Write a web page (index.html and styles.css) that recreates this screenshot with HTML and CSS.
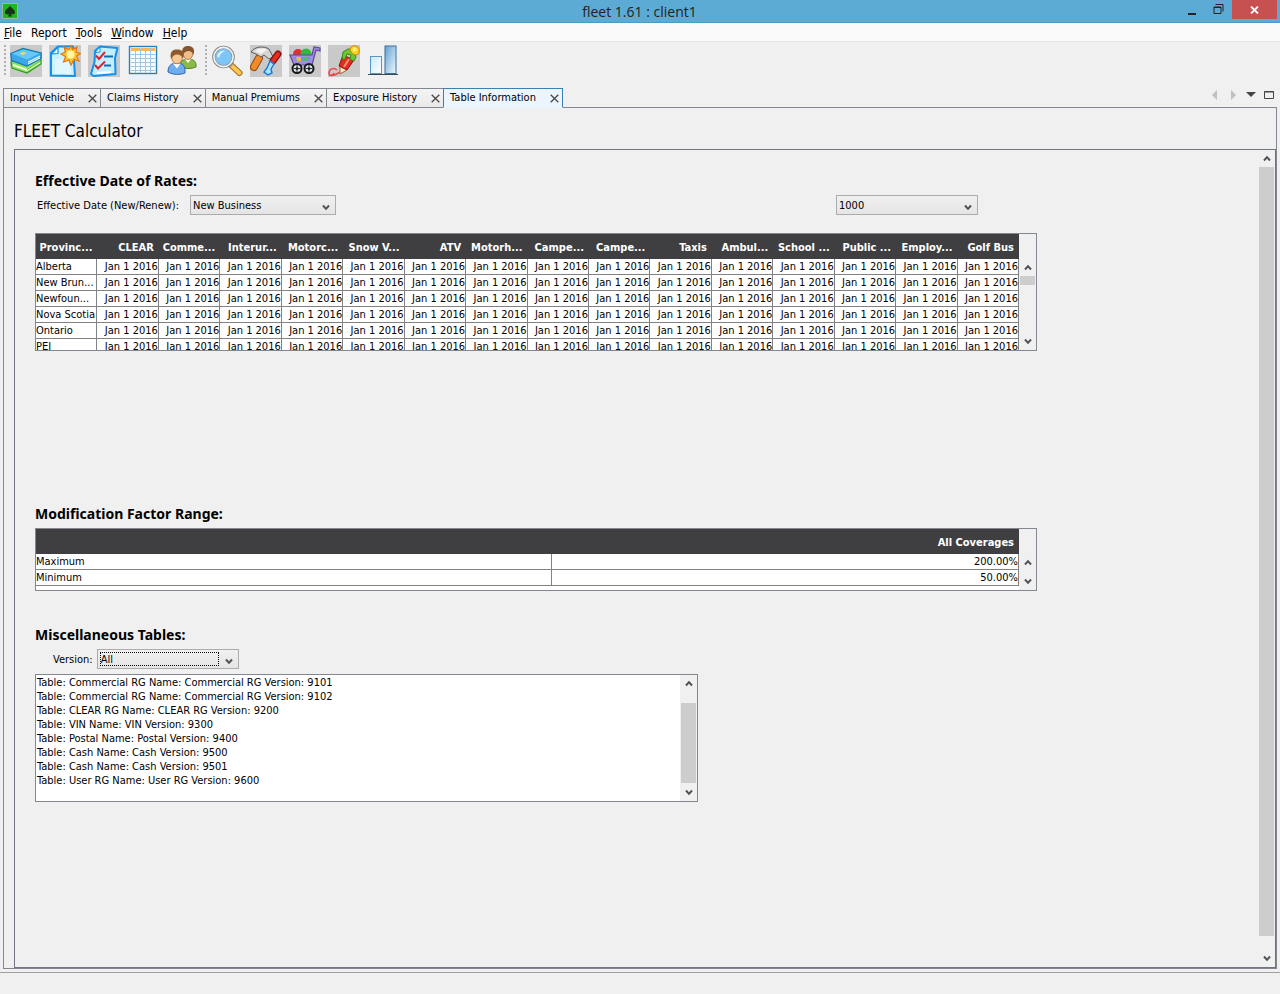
FILE: index.html
```
<!DOCTYPE html>
<html lang="en">
<head>
    <meta charset="UTF-8">
    <meta name="viewport" content="width=device-width, initial-scale=1.0">
    <title>fleet 1.61 : client1</title>
    <link rel="stylesheet" href="styles.css">
</head>
<body>

    <svg class="symbols" aria-hidden="true">
        <symbol id="up" viewBox="0 0 8 7"><path d="M1 5.5 4 2.2 7 5.5" fill="none" stroke="#505058" stroke-width="2"/></symbol>
        <symbol id="down" viewBox="0 0 8 7"><path d="M1 1.5 4 4.8 7 1.5" fill="none" stroke="#505058" stroke-width="2"/></symbol>
        <symbol id="cross" viewBox="0 0 9 9"><path d="M.7.7 8.3 8.3M8.3.7.7 8.3" fill="none" stroke="#484848" stroke-width="1.3"/></symbol>
    </svg>

    <header class="titlebar">
        <svg class="app-icon" viewBox="0 0 16 16"><rect width="16" height="16" fill="#9cb89c"/><rect x="1" y="1" width="14" height="14" fill="#22b51e"/><path d="M8 2.500C7 5 3 6.500 3 9.200c0 2.300 2.800 2.800 4.200 1.200L6 13.500h4l-1.200-3.100C10.200 12 13 11.500 13 9.200 13 6.500 9 5 8 2.500z" fill="#173417"/></svg>
        <h1 class="window-title">fleet 1.61 : client1</h1>
        <div class="window-buttons">
            <button class="win-btn" aria-label="Minimize"><svg width="10" height="12"><path d="M1 9h8v2H1z" fill="#222"/></svg></button>
            <button class="win-btn" aria-label="Restore"><svg width="11" height="11"><path d="M1 3h7v6.500H1zM2.500.5H10v7" fill="none" stroke="#222"/><path d="M1 3.500h7" stroke="#222"/></svg></button>
            <button class="win-btn win-close" aria-label="Close"><svg width="9" height="8"><path d="M1 .5 8 7.500M8 .5 1 7.500" stroke="#fff" stroke-width="1.800"/></svg></button>
        </div>
    </header>

    <nav class="menubar">
        <button><u>F</u>ile</button>
        <button>Report</button>
        <button><u>T</u>ools</button>
        <button><u>W</u>indow</button>
        <button><u>H</u>elp</button>
    </nav>

    <div class="toolbar">
        <div class="tool-group">
            <button class="tool shaded" aria-label="Books">
                <svg viewBox="0 0 32 32">
                    <path d="M1 17 17 12 31 15v4L17 28 2 23z" fill="#8be05a" stroke="#2c9c26" stroke-width="1.200"/>
                    <path d="M3 20 17 25 30 17" fill="none" stroke="#e8ffd8" stroke-width="2"/>
                    <path d="M17 24.500 30 16.500" stroke="#52b838"/>
                    <path d="M0.800 8.500 13 3.500 31.200 8v5.500L17 21 1.500 15.500z" fill="#3ba6e8" stroke="#1479b8" stroke-width="1.200"/>
                    <path d="M2 8.500 13.500 4.500 29.500 8.500 17 14.500z" fill="#66c8f8"/>
                    <path d="M18 16.500 30 10.500v3L18 19.500z" fill="#eefcff"/>
                    <path d="M18 18 30 12" stroke="#76b8d8" stroke-width=".8"/>
                    <path d="M9.500 8.500 13 7l3.500 1-3.500 2z" fill="#f5e03a"/>
                </svg>
            </button>
            <button class="tool shaded" aria-label="New document">
                <svg viewBox="0 0 32 32">
                    <path d="M2 8 9 1.500h15L26 31 2 30.500z" fill="#c9f1ff" stroke="#1291ee" stroke-width="2" stroke-linejoin="round"/>
                    <path d="M9 2v6.500L2.500 9z" fill="#eefcff" stroke="#1291ee" stroke-width="1.200"/>
                    <path d="M6 14h9l7 7v8H6z" fill="#e8fbff" opacity=".7"/>
                    <path d="M22 0l1.500 4.500L28 2l-1 5 4.500 1.500L27.500 11l2.500 5-5-1.500L22 20l-2-5-5.500 2 2-5.500L12 9l4.500-2L15 2l5 2.500z" fill="#ffc22e" stroke="#e8780c" stroke-width="1.200"/>
                    <circle cx="21.500" cy="9.500" r="4" fill="#fff6a8"/>
                </svg>
            </button>
            <button class="tool shaded" aria-label="Checklist">
                <svg viewBox="0 0 32 32">
                    <path d="M7 6 12 1.500 29.500 3 27 13l.5 16-22 2L3 29 6.500 17z" fill="#c2efff" stroke="#1291ee" stroke-width="2" stroke-linejoin="round"/>
                    <path d="M12 2v5L7 7.500z" fill="#f2fdff" stroke="#1291ee"/>
                    <path d="M16 11.500h9M16 20.500h7" stroke="#1768b5" stroke-width="2.200"/>
                    <path d="M8 10.500 11 14l6-7M7 20l3 3.500 7-7" fill="none" stroke="#e0202c" stroke-width="2"/>
                    <path d="M9 28l14-1" stroke="#fff" stroke-width="2"/>
                </svg>
            </button>
            <button class="tool" aria-label="Table">
                <svg viewBox="0 0 32 32">
                    <rect x="2.500" y="1.500" width="27" height="27" fill="#f6fcff" stroke="#2d82b4" stroke-width="1.400"/>
                    <path d="M4 3h24v3H4z" fill="#f5ba52"/>
                    <path d="M4 9.500h24M4 13.500h24M4 17.500h24M4 21.500h24M4 25.500h24M8.500 3v25M13.500 3v25M18.500 3v25M23.500 3v25" stroke="#9cc8e2"/>
                </svg>
            </button>
            <button class="tool" aria-label="Users">
                <svg viewBox="0 0 32 32">
                    <path d="M14 22c0-6 3-8 8-8s8 2 8 6v2c-5 2-11 2-16 0z" fill="#8cba48" stroke="#56822c"/>
                    <path d="m19 14 3 4 3-4z" fill="#fff"/>
                    <ellipse cx="22" cy="8.500" rx="4.800" ry="6" fill="#f0bd8c" stroke="#a86c38" stroke-width=".8"/>
                    <path d="M16.500 10C15 3 18 1 22 1s7.500 2 5.500 9c-1-3-3-4-5-4s-4 1-6 4z" fill="#85562c"/>
                    <path d="M2 27c0-6 3-9 9-9s8 3 8 8v2c-5 2-12 2-17-1z" fill="#6eacee" stroke="#2c68ae"/>
                    <path d="m7 18.500 4 5 3.500-5z" fill="#fff"/>
                    <ellipse cx="11" cy="12.500" rx="5.300" ry="6.300" fill="#f7c894" stroke="#a86c38" stroke-width=".8"/>
                    <path d="M5 14C3.500 7 6 4.500 11 4.500s8.500 2.500 6 9.500c-1-3-3-4.500-6-4.500S7 11 5 14z" fill="#8f5a2c"/>
                </svg>
            </button>
        </div>
        <div class="tool-group">
            <button class="tool" aria-label="Search">
                <svg viewBox="0 0 32 32">
                    <path d="m19 19 9.500 9" stroke="#a4702a" stroke-width="6" stroke-linecap="round"/>
                    <path d="m21 21 7.500 7" stroke="#ffc350" stroke-width="4" stroke-linecap="round"/>
                    <path d="m18 18 3 3" stroke="#999" stroke-width="3"/>
                    <circle cx="12.500" cy="12" r="9.800" fill="#7cc5f4" stroke="#858585" stroke-width="3"/>
                    <circle cx="12.500" cy="12" r="9.600" fill="none" stroke="#f5f5f5" stroke-width="1.600"/>
                    <path d="M6 11c1-4 5-6 8-5-3 1-5 3-6 7z" fill="#d8f4ff"/>
                </svg>
            </button>
            <button class="tool shaded" aria-label="Settings">
                <svg viewBox="0 0 32 32">
                    <path d="M9 13 4 22" stroke="#8c4a14" stroke-width="8" stroke-linecap="round"/>
                    <path d="M9 13 4 22" stroke="#f08a2c" stroke-width="6" stroke-linecap="round"/>
                    <path d="M1 7C5 1 14 1 19 4l4 8-4 2-5-4-3 2-5-3z" fill="#d4d4d4" stroke="#5c5c5c"/>
                    <path d="M5 6c4-3 9-3 12-1l-6 4z" fill="#f2f2f2"/>
                    <path d="m28 9-5 7" stroke="#8c1010" stroke-width="7" stroke-linecap="round"/>
                    <path d="m28 9-5 7" stroke="#e03022" stroke-width="4" stroke-linecap="round"/>
                    <path d="m20 16 4 3-3 5 1 4-4 2-4-3 3-4z" fill="#a6e5ff" stroke="#1875dc" stroke-width="1.400"/>
                </svg>
            </button>
            <button class="tool shaded" aria-label="Cart">
                <svg viewBox="0 0 32 32">
                    <circle cx="9" cy="9" r="5" fill="#e03030"/>
                    <circle cx="17" cy="9" r="5.500" fill="#34b83c"/>
                    <path d="M1 10h22l2-8 6 1v3l-4-1-4 15H5z" fill="#a48ae0" stroke="#5f469c" stroke-width="1.200"/>
                    <path d="M5 12h16l-1 4H7z" fill="#5c9de0"/>
                    <path d="M7 12h5v4H8z" fill="#eebb38"/>
                    <path d="M14 12h4v4h-4z" fill="#55bb68"/>
                    <circle cx="8" cy="23.500" r="4.500" fill="#dcebf5" stroke="#181818" stroke-width="2"/>
                    <circle cx="20" cy="23.500" r="4.500" fill="#dcebf5" stroke="#181818" stroke-width="2"/>
                    <path d="M8 20v7M4.500 23.500h7M20 20v7M16.500 23.500h7" stroke="#333"/>
                    <circle cx="8" cy="23.500" r="1.500" fill="#222"/><circle cx="20" cy="23.500" r="1.500" fill="#222"/>
                </svg>
            </button>
            <button class="tool shaded" aria-label="Edit">
                <svg viewBox="0 0 32 32">
                    <path d="M9 25C6 22 1 24 1 28c0 3 4 3 5 0M1 30c4 2 8-1 11-3" fill="none" stroke="#f04444" stroke-width="1.500"/>
                    <path d="m12 20 7 5-7 4z" fill="#ffe8c8" stroke="#936838"/>
                    <path d="m15 10 11 5-7 10-8-4z" fill="#e42a1d" stroke="#8c170c"/>
                    <path d="m21 14-5 8" stroke="#ff8c70" stroke-width="2"/>
                    <path d="m14 14 1-7 5-3h4l4 8-2 4-4-2 1-4-4-1-2 5z" fill="#6cc832" stroke="#3a8a18"/>
                    <path d="M22 5c0-3 3-5 6-4s4 4 3 7c-2 3-6 3-9-3z" fill="#ffd322" stroke="#cf7d10"/>
                    <circle cx="26.500" cy="4.500" r="2" fill="#fff27a"/>
                </svg>
            </button>
            <button class="tool" aria-label="Chart">
                <svg viewBox="0 0 32 32">
                    <defs>
                        <linearGradient id="bar" x2="1" y2="1"><stop stop-color="#669fd0"/><stop offset="1" stop-color="#eefaff"/></linearGradient>
                        <linearGradient id="bar2" y2="1"><stop stop-color="#c9e8fc"/><stop offset="1" stop-color="#fff"/></linearGradient>
                    </defs>
                    <rect x="3.500" y="11.500" width="11" height="17" fill="url(#bar2)" stroke="#5b94be"/>
                    <rect x="18" y="1" width="11" height="27.500" fill="url(#bar)" stroke="#3470a4"/>
                    <path d="M1 29.500h30" stroke="#3c4854"/>
                </svg>
            </button>
        </div>
    </div>

    <div class="tabs">
        <div class="tab"><button>Input Vehicle</button><button class="tab-close" aria-label="Close"><svg><use href="#cross"/></svg></button></div>
        <div class="tab"><button>Claims History</button><button class="tab-close" aria-label="Close"><svg><use href="#cross"/></svg></button></div>
        <div class="tab"><button>Manual Premiums</button><button class="tab-close" aria-label="Close"><svg><use href="#cross"/></svg></button></div>
        <div class="tab"><button>Exposure History</button><button class="tab-close" aria-label="Close"><svg><use href="#cross"/></svg></button></div>
        <div class="tab active"><button>Table Information</button><button class="tab-close" aria-label="Close"><svg><use href="#cross"/></svg></button></div>
        <div class="tab-controls">
            <button aria-label="Previous"><svg width="10" height="10"><path d="M7 0v10L2 5z" fill="#c0c0c0"/></svg></button>
            <button aria-label="Next"><svg width="10" height="10"><path d="M3 0v10l5-5z" fill="#c0c0c0"/></svg></button>
            <button aria-label="List tabs"><svg width="10" height="10"><path d="M0 2h10L5 7z" fill="#444"/></svg></button>
            <button aria-label="Maximize"><svg width="10" height="10"><path d="M.5 1.500h9v7h-9zM0 2h10" fill="none" stroke="#444"/></svg></button>
        </div>
    </div>

    <main class="page">
        <h2 class="page-title">FLEET Calculator</h2>
        <div class="pane">
            <div class="content">

                <section class="rates">
                    <h3>Effective Date of Rates:</h3>
                    <div class="form-row">
                        <label for="business">Effective Date (New/Renew):</label>
                        <select id="business" class="combo business"><option>New Business</option></select>
                        <select class="combo number" aria-label="Number"><option>1000</option></select>
                    </div>
                    <div class="grid rates-grid">
                        <table id="rates">
                            <thead>
                                <tr></tr>
                            </thead>
                            <tbody></tbody>
                        </table>
                        <div class="scroll under-head">
                            <button aria-label="Scroll up"><svg><use href="#up"/></svg></button>
                            <div class="thumb"></div>
                            <button aria-label="Scroll down"><svg><use href="#down"/></svg></button>
                        </div>
                    </div>
                </section>

                <section class="factors">
                    <h3>Modification Factor Range:</h3>
                    <div class="grid factor-grid">
                        <table>
                            <thead>
                                <tr><th class="factor-name"></th><th>All Coverages</th></tr>
                            </thead>
                            <tbody>
                                <tr><td>Maximum</td><td>200.00%</td></tr>
                                <tr><td>Minimum</td><td>50.00%</td></tr>
                            </tbody>
                        </table>
                        <div class="scroll under-head">
                            <button aria-label="Scroll up"><svg><use href="#up"/></svg></button>
                            <button aria-label="Scroll down"><svg><use href="#down"/></svg></button>
                        </div>
                    </div>
                </section>

                <section class="misc">
                    <h3>Miscellaneous Tables:</h3>
                    <div class="form-row version-row">
                        <label for="version">Version:</label>
                        <div class="combo version">
                            <select id="version"><option>All</option></select>
                        </div>
                    </div>
                    <div class="list-box">
                        <ul>
                            <li>Table: Commercial RG Name: Commercial RG Version: 9101</li>
                            <li>Table: Commercial RG Name: Commercial RG Version: 9102</li>
                            <li>Table: CLEAR RG Name: CLEAR RG Version: 9200</li>
                            <li>Table: VIN Name: VIN Version: 9300</li>
                            <li>Table: Postal Name: Postal Version: 9400</li>
                            <li>Table: Cash Name: Cash Version: 9500</li>
                            <li>Table: Cash Name: Cash Version: 9501</li>
                            <li>Table: User RG Name: User RG Version: 9600</li>
                        </ul>
                        <div class="scroll list-scroll">
                            <button aria-label="Scroll up"><svg><use href="#up"/></svg></button>
                            <div class="thumb"></div>
                            <button aria-label="Scroll down"><svg><use href="#down"/></svg></button>
                        </div>
                    </div>
                </section>

            </div>
            <div class="scroll page-scroll">
                <button aria-label="Scroll up"><svg><use href="#up"/></svg></button>
                <div class="thumb"></div>
                <button aria-label="Scroll down"><svg><use href="#down"/></svg></button>
            </div>
        </div>
    </main>

    <footer class="statusbar"></footer>

    <script>
        const columns = ['Provinc...', 'CLEAR', 'Comme...', 'Interur...', 'Motorc...', 'Snow V...', 'ATV', 'Motorh...',
            'Campe...', 'Campe...', 'Taxis', 'Ambul...', 'School ...', 'Public ...', 'Employ...', 'Golf Bus'];
        const provinces = ['Alberta', 'New Brun...', 'Newfoun...', 'Nova Scotia', 'Ontario', 'PEI'];

        const headRow = document.querySelector('#rates thead tr');
        columns.forEach(name => {
            const th = document.createElement('th');
            th.textContent = name;
            headRow.appendChild(th);
        });

        const body = document.querySelector('#rates tbody');
        provinces.forEach(province => {
            const row = body.insertRow();
            row.insertCell().textContent = province;
            for (let i = 1; i < columns.length; i++) {
                row.insertCell().textContent = 'Jan 1 2016';
            }
        });
    </script>

</body>
</html>
```
FILE: styles.css
```
* {
    box-sizing: border-box;
}

body {
    font-family: "DejaVu Sans Condensed", "Noto Sans", sans-serif;
    font-size: 11px;
    line-height: 14px;
    margin: 0;
    background-color: #f0f0f0;
    color: #000;
    display: flex;
    flex-direction: column;
    min-height: 100vh;
}

button {
    font: inherit;
    color: inherit;
    background: none;
    border: none;
    padding: 0;
    margin: 0;
}

svg {
    display: block;
}

.symbols {
    display: none;
}

/* window frame */
.titlebar {
    display: grid;
    grid-template-columns: 1fr auto 1fr;
    align-items: start;
    height: 23px;
    padding: 0 3px 0 2px;
    background-color: #5cabd5;
    border-bottom: 1px solid #4a9cc4;
}

.app-icon {
    width: 16px;
    height: 16px;
    margin-top: 3px;
}

.window-title {
    margin: 0;
    font-family: "Open Sans", sans-serif;
    font-size: 14px;
    line-height: 24px;
    font-weight: normal;
    color: #222;
}

.window-buttons {
    display: flex;
    justify-content: flex-end;
}

.win-btn {
    display: flex;
    align-items: center;
    justify-content: center;
    width: 27px;
    height: 19px;
}

.win-close {
    width: 45px;
    background-color: #c75050;
}

.menubar {
    display: flex;
    gap: 9px;
    height: 19px;
    padding: 2px 4px 0;
    font-size: 12px;
    background-color: #fafafa;
    border-bottom: 1px solid #e6e6e6;
}

.toolbar {
    display: flex;
    gap: 7px;
    padding: 3px 4px 11px;
}

.tool-group {
    display: flex;
    gap: 7px;
}

.tool-group::before {
    content: "";
    width: 2px;
    height: 31px;
    margin-right: -3px;
    background: repeating-linear-gradient(#b0b0b0 0 2px, transparent 2px 4px);
}

.tool {
    width: 32px;
    height: 32px;
}

.tool.shaded {
    background-color: #c9c9c9;
}

/* tabs */
.tabs {
    display: flex;
    height: 20px;
    padding: 0 6px 0 3px;
    background: linear-gradient(#828790, #828790) bottom left 3px / calc(100% - 6px) 1px no-repeat;
}

.tab {
    display: flex;
    align-items: center;
    gap: 14px;
    padding: 0 3px 0 6px;
    border: 1px solid #828790;
    border-right: none;
    background: linear-gradient(#f4f4f4, #e9e9e9);
}

.tab.active {
    border: 1px solid #3c7fb1;
    border-bottom-color: #eaf5fd;
    background: #eaf5fd;
}

.tab-close,
.tab-close svg {
    width: 9px;
    height: 9px;
}

.tab-controls {
    display: flex;
    align-items: center;
    gap: 8px;
    height: 14px;
    margin-left: auto;
}

/* page */
.page {
    flex: 1;
    display: flex;
    flex-direction: column;
    margin: 0 3px 3px;
    padding-left: 10px;
    border: 1px solid #828790;
    border-top: none;
}

.page-title {
    margin: 13px 0 7px;
    font-size: 17px;
    line-height: 21px;
    font-weight: normal;
}

.pane {
    flex: 1;
    display: flex;
    border: 1px solid #70757f;
}

.content {
    flex: 1;
    min-width: 0;
    padding: 21px 20px;
}

h3 {
    margin: 0;
    font-family: "Noto Sans", sans-serif;
    font-size: 14px;
    line-height: 20px;
}

.form-row {
    display: flex;
    align-items: center;
    margin-top: 4px;
    padding-left: 2px;
}

.form-row label {
    padding-top: 2px;
    white-space: nowrap;
}

.rates,
.factors {
    max-width: 1002px;
}

.rates {
    margin-bottom: 153px;
}

.factors {
    margin-bottom: 34px;
}

select {
    appearance: none;
    font: inherit;
    color: inherit;
    border-radius: 0;
}

.combo {
    height: 20px;
    padding: 2px 20px 0 2px;
    border: 1px solid #acacac;
    background: url("data:image/svg+xml,%3Csvg xmlns='http://www.w3.org/2000/svg' width='8' height='7'%3E%3Cpath d='M1 1.5 4 4.8 7 1.5' fill='none' stroke='%23505058' stroke-width='2'/%3E%3C/svg%3E") right 5px top 8px no-repeat,
        linear-gradient(#f0f0f0, #e5e5e5);
}

.business {
    width: 146px;
    margin-left: 11px;
}

.number {
    width: 142px;
    margin-left: auto;
    margin-right: 59px;
}

.version-row {
    padding-left: 18px;
    gap: 4px;
}

.version {
    display: flex;
    width: 142px;
    padding: 2px 19px 2px 2px;
}

.version select {
    flex: 1;
    padding: 0;
    border: 1px dotted #000;
    background: none;
}

/* tables */
.grid {
    display: flex;
    overflow: hidden;
    border: 1px solid #828790;
    background-color: #fff;
}

.rates-grid {
    height: 118px;
    margin-top: 18px;
}

.factor-grid {
    height: 63px;
    margin-top: 4px;
}

table {
    flex: 1;
    width: 100%;
    min-width: 0;
    table-layout: fixed;
    border-collapse: separate;
    border-spacing: 0;
    align-self: flex-start;
}

th {
    height: 25px;
    padding: 2px 5px 0 0;
    text-align: right;
    white-space: nowrap;
    color: #fff;
    background-color: #3f3f41;
}

td {
    height: 16px;
    padding: 1px 0 0;
    line-height: 14px;
    text-align: right;
    white-space: nowrap;
    border-right: 1px solid #828282;
    border-bottom: 1px solid #828282;
}

td:first-child {
    text-align: left;
}

.factor-name {
    width: 52.5%;
}

/* scroll bars */
.scroll {
    flex: none;
    display: flex;
    flex-direction: column;
    width: 17px;
    background-color: #f0f0f0;
}

.scroll button {
    display: flex;
    align-items: center;
    justify-content: center;
    height: 17px;
}

.scroll svg {
    width: 8px;
    height: 7px;
}

.scroll button:last-child {
    margin-top: auto;
}

.under-head {
    padding-top: 25px;
}

.thumb {
    height: 9px;
    margin: 0 1px;
    background-color: #cdcdcd;
}

.page-scroll {
    width: 16px;
}

.page-scroll .thumb {
    flex: 1;
    margin: 0 1px 14px 0;
}

.list-box {
    display: flex;
    max-width: 663px;
    height: 128px;
    margin-top: 5px;
    border: 1px solid #828790;
    background-color: #fff;
}

.list-box ul {
    flex: 1;
    margin: 0;
    padding: 1px 1px 0;
    list-style: none;
}

.list-scroll .thumb {
    height: 80px;
    margin-top: 11px;
}

.statusbar {
    height: 22px;
    border-top: 1px solid #a0a0a0;
}
```
